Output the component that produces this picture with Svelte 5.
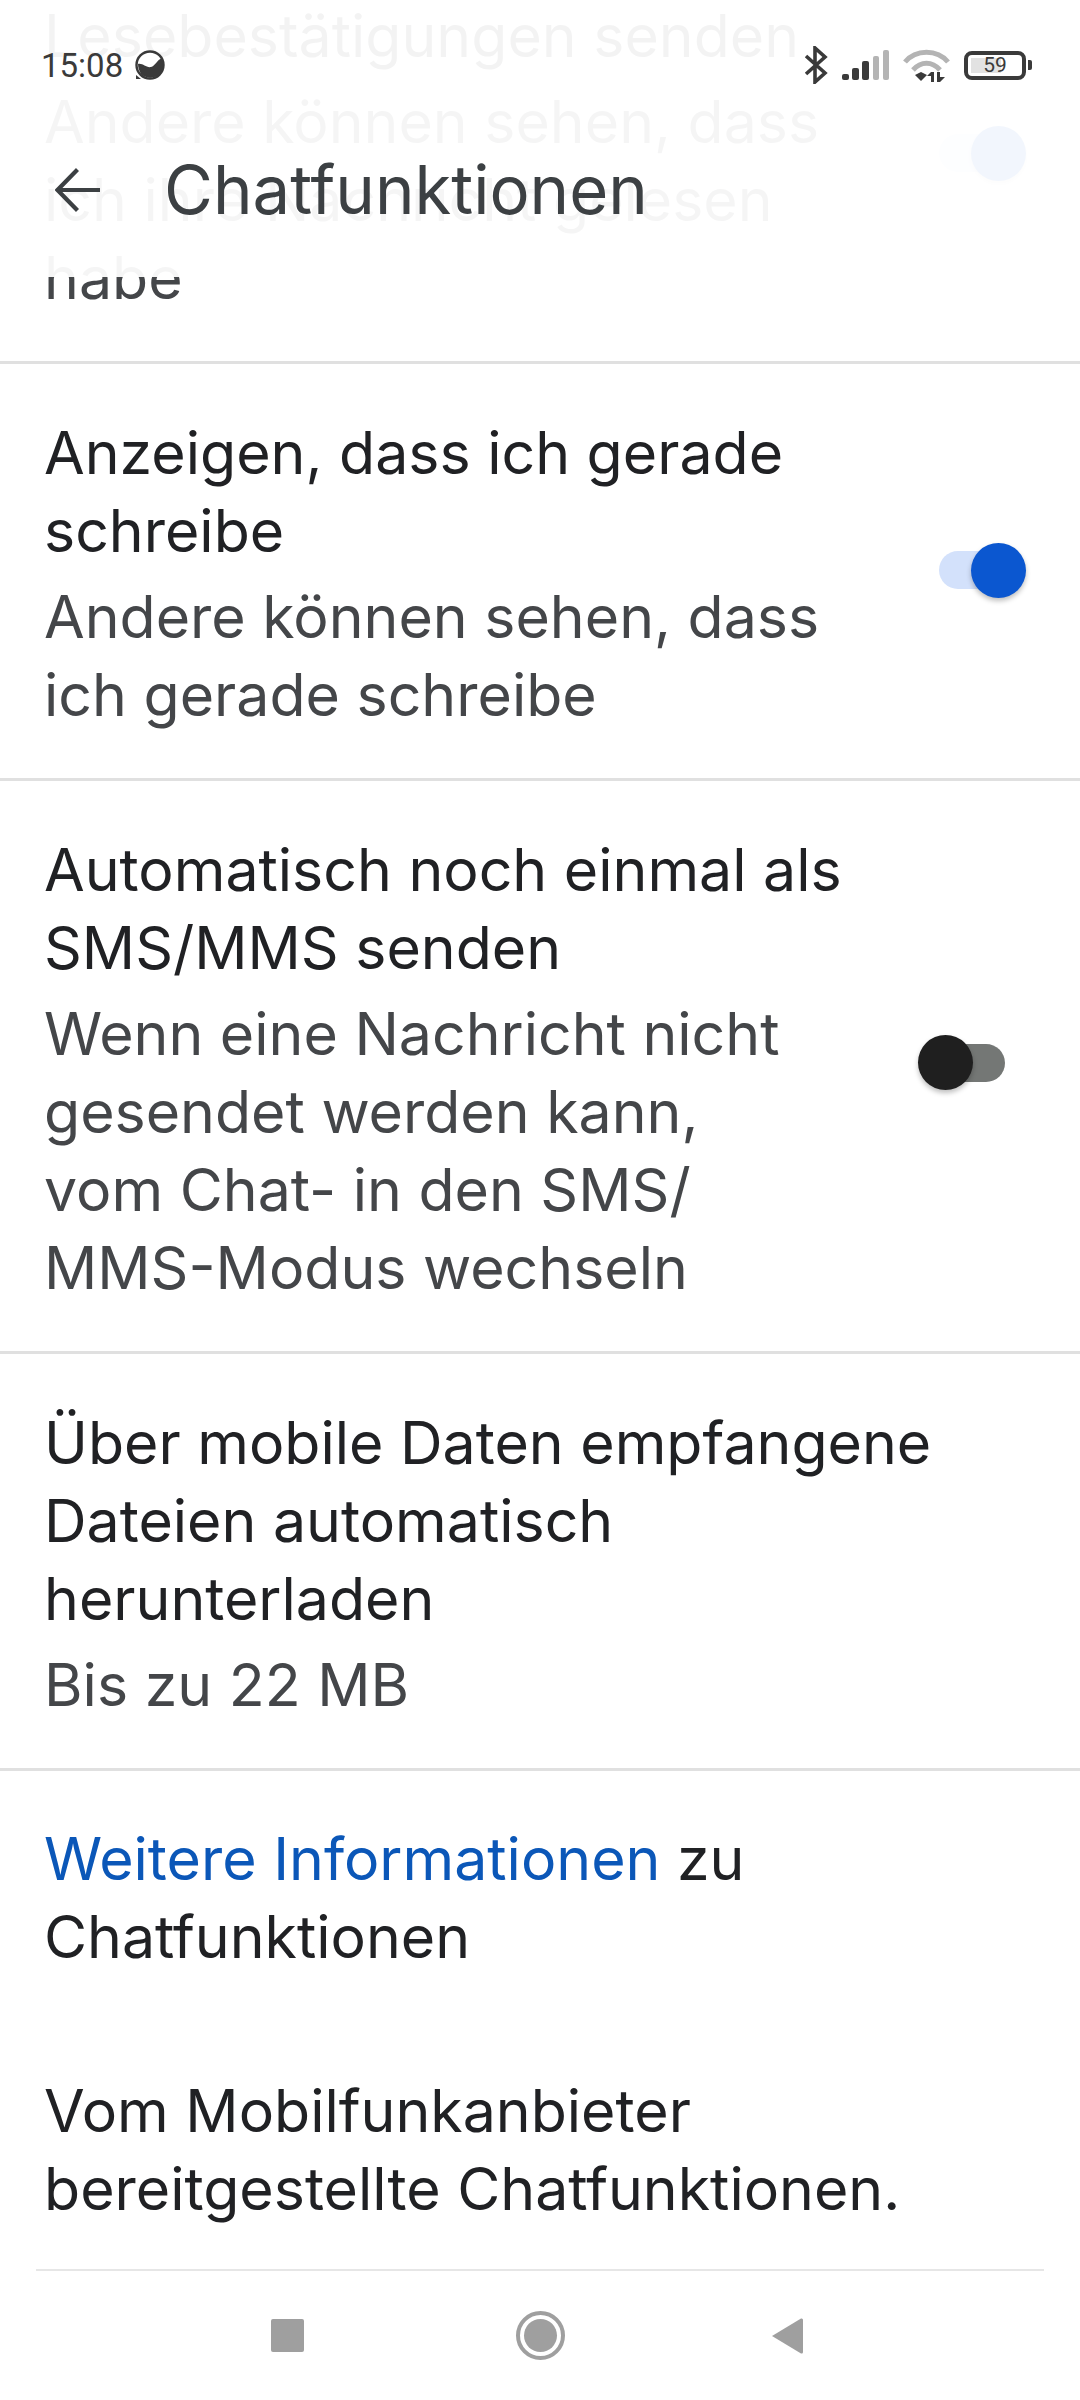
<script>
  const rows = [
    {
      title: ['Anzeigen, dass ich gerade', 'schreibe'],
      sub: ['Andere können sehen, dass', 'ich gerade schreibe'],
      toggle: 'on'
    },
    {
      title: ['Automatisch noch einmal als', 'SMS/MMS senden'],
      sub: ['Wenn eine Nachricht nicht', 'gesendet werden kann,', 'vom Chat- in den SMS/', 'MMS-Modus wechseln'],
      toggle: 'off'
    },
    {
      title: ['Über mobile Daten empfangene', 'Dateien automatisch', 'herunterladen'],
      sub: ['Bis zu 22 MB']
    }
  ];
</script>

<div class="page">
  <div class="list">
    <section class="row first">
      <div class="text">
        <div class="title">Lesebestätigungen senden</div>
        <div class="sub">Andere können sehen, dass<br />ich ihre Nachricht gelesen<br />habe</div>
      </div>
      <span class="toggle on"><span class="track"></span><span class="thumb"></span></span>
    </section>

    {#each rows as row}
      <section class="row">
        <div class="text">
          <div class="title">
            {#each row.title as line}<div>{line}</div>{/each}
          </div>
          <div class="sub">
            {#each row.sub as line}<div>{line}</div>{/each}
          </div>
        </div>
        {#if row.toggle}
          <span class="toggle {row.toggle}"><span class="track"></span><span class="thumb"></span></span>
        {/if}
      </section>
    {/each}

    <div class="notes">
      <p><span class="link">Weitere Informationen</span> zu<br />Chatfunktionen</p>
      <p>Vom Mobilfunkanbieter<br />bereitgestellte Chatfunktionen.</p>
    </div>
  </div>

  <header class="top">
    <div class="status">
      <span class="time">15:08</span>
      <svg class="moon" width="30" height="30" viewBox="0 0 30 30">
        <circle cx="15" cy="15" r="13.5" fill="#fff" stroke="#3a3a3a" stroke-width="2.4" />
        <path d="M1 25 V29 H6 Z" fill="#3a3a3a" />
        <path d="M3 14 C8 13 11 18 16 17 C20 16 22 10 27 8 C29 12 29 18 26 23 C22 28 12 30 6 24 C4 21 3 17 3 14 Z" fill="#3a3a3a" />
      </svg>
      <span class="spacer"></span>
      <svg width="24" height="38" viewBox="0 0 24 38" fill="none" stroke="#3a3a3a" stroke-width="3.6">
        <path d="M2 10 L21 27 L11 36 V2 L21 11 L2 28" />
      </svg>
      <svg class="signal" width="48" height="30" viewBox="0 0 48 30">
        <rect x="0" y="24" width="7" height="6" rx="2" fill="#3a3a3a" />
        <rect x="10" y="18" width="7" height="12" rx="2" fill="#3a3a3a" />
        <rect x="20" y="11" width="7" height="19" rx="2" fill="#3a3a3a" />
        <rect x="31" y="6" width="6" height="24" rx="2" fill="#b4b4b4" />
        <rect x="41" y="0" width="6" height="30" rx="2" fill="#b4b4b4" />
      </svg>
      <svg class="wifi" width="47" height="33" viewBox="0 0 47 33">
        <g fill="none" stroke="#b4b4b4" stroke-width="5">
          <path d="M2 13 C13 0 34 0 45 13" />
          <path d="M10 21 C18 12 29 12 37 21" />
        </g>
        <path d="M12 26 L18 23 L24 26 L18 32 Z" fill="#3a3a3a" />
        <path d="M28 33 V23 H31 V33 Z M34 33 V23 H37 V33 Z M24 27 L28 23 V27 Z M37 28 H42 L37 33 Z" fill="#3a3a3a" />
      </svg>
      <span class="battery">
        <span class="charge"></span>
        <span class="level">59</span>
      </span>
      <span class="nub"></span>
    </div>
    <div class="bar">
      <svg width="45" height="44" viewBox="0 0 45 44" fill="none" stroke="#3c4043" stroke-width="4.200">
        <path d="M45 22 H3 M22.500 1.500 L2.500 22 L22.500 42.500" />
      </svg>
      <h1>Chatfunktionen</h1>
    </div>
  </header>

  <nav class="nav">
    <div class="nav-line"></div>
    <div class="nav-icons">
      <span class="square"></span>
      <span class="home"><span></span></span>
      <svg width="32" height="38" viewBox="0 0 32 38">
        <path d="M1 19 L30 1.500 Q32 1 32 3 V35 Q32 37 30 36.500 Z" fill="#9f9f9f" />
      </svg>
    </div>
  </nav>
</div>

<style>
  :global(body) {
    margin: 0;
    background: #fff;
  }

  .page {
    position: relative;
    width: 1080px;
    height: 2400px;
    overflow: hidden;
    background: #fff;
    font-family: Inter, 'Noto Sans', sans-serif;
    display: flex;
    flex-direction: column;
  }

  .list {
    flex: 1;
    margin-top: -53px;
    overflow: hidden;
  }

  .row {
    display: flex;
    align-items: center;
    justify-content: space-between;
    padding: 50px 54px 44px 44px;
    border-bottom: 3px solid #e0e0e0;
  }

  .title {
    font-size: 59px;
    line-height: 78px;
    color: #202124;
  }

  .sub {
    font-size: 59px;
    line-height: 78px;
    color: #444649;
    margin-top: 8px;
  }

  .toggle {
    position: relative;
    display: block;
    width: 66px;
    height: 38px;
    margin-right: 21px;
    flex: none;
  }

  .track {
    display: block;
    height: 100%;
    border-radius: 19px;
  }

  .thumb {
    position: absolute;
    top: -8.5px;
    width: 55px;
    height: 55px;
    border-radius: 50%;
    box-shadow: 0 3px 5px rgba(0, 0, 0, 0.25);
  }

  .on {
    margin-top: -8px;
  }

  .on .track {
    background: #d3e1fb;
  }

  .on .thumb {
    right: -21px;
    background: #0b57d0;
  }

  .off {
    margin-top: -13px;
  }

  .off .track {
    background: #747775;
  }

  .off .thumb {
    left: -21px;
    background: #1f1f1f;
  }

  .notes {
    padding: 49px 44px 0;
    font-size: 59px;
    line-height: 78px;
    color: #202124;
  }

  .notes p {
    margin: 0 0 96px;
  }

  .link {
    color: #0b57b8;
  }

  .top {
    position: absolute;
    top: 0;
    left: 0;
    right: 0;
    height: 277px;
    background: rgba(255, 255, 255, 0.95);
  }

  .status {
    height: 130px;
    padding: 0 48px 0 41px;
    display: flex;
    align-items: center;
    box-sizing: border-box;
    color: #3a3a3a;
  }

  .time {
    font-family: Roboto, sans-serif;
    font-size: 33px;
  }

  .moon {
    margin-left: 12px;
  }

  .spacer {
    flex: 1;
  }

  .signal {
    margin-left: 14px;
  }

  .wifi {
    margin-left: 13px;
  }

  .battery {
    position: relative;
    margin-left: 14px;
    width: 62px;
    height: 29px;
    box-sizing: border-box;
    border: 4px solid #3a3a3a;
    border-radius: 8px;
    display: flex;
    align-items: center;
    justify-content: center;
    font-family: Roboto, sans-serif;
    font-size: 21px;
  }

  .charge {
    position: absolute;
    left: 3px;
    top: 3px;
    bottom: 3px;
    width: 30px;
    background: #e2e2e2;
  }

  .level {
    position: relative;
  }

  .nub {
    width: 4px;
    height: 10px;
    margin-left: 2px;
    background: #3a3a3a;
    border-radius: 0 2px 2px 0;
  }

  .bar {
    display: flex;
    align-items: center;
    padding-left: 55px;
    margin-top: 20px;
  }

  .bar h1 {
    margin: 0 0 0 64px;
    font-size: 67px;
    line-height: 80px;
    font-weight: 400;
    color: #3c4043;
  }

  .nav {
    flex: none;
    height: 131px;
    background: #fff;
  }

  .nav-line {
    height: 2px;
    margin: 0 36px;
    background: #e6e6e6;
  }

  .nav-icons {
    height: 129px;
    padding: 0 277px 0 271px;
    display: flex;
    align-items: center;
    justify-content: space-between;
  }

  .square {
    width: 33px;
    height: 33px;
    margin-right: 5px;
    border-radius: 2px;
    background: #9f9f9f;
  }

  .home {
    width: 49px;
    height: 49px;
    box-sizing: border-box;
    border: 4px solid #9f9f9f;
    border-radius: 50%;
    display: flex;
    align-items: center;
    justify-content: center;
  }

  .home span {
    width: 33px;
    height: 33px;
    border-radius: 50%;
    background: #9f9f9f;
  }
</style>
